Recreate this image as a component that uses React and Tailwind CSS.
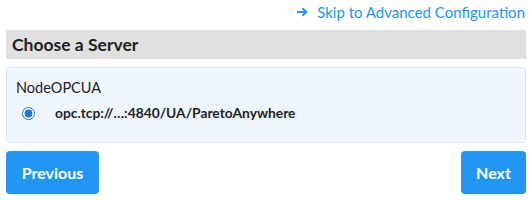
import React from "react";

// Server picker step — pick an OPC UA endpoint then continue
const SERVERS = [
  {
    name: "NodeOPCUA",
    endpoints: ["opc.tcp://\u2026:4840/UA/ParetoAnywhere"],
  },
];

export default function App() {
  const [selected, setSelected] = React.useState(SERVERS[0].endpoints[0]);

  return (
    <div className="w-[532px] h-[200px] bg-white px-[6px] font-['Lato',sans-serif] text-[#222]">
      {/* Skip link */}
      <div className="flex justify-end h-[30px] items-start pt-[2px] pr-[1px]">
        <a href="#" className="flex items-center gap-[9px] text-[15px] leading-[20px] text-[#2196f3] no-underline">
          <svg width="11" height="10" viewBox="0 0 11 10" fill="none" stroke="#2196f3" strokeWidth="2">
            <path d="M0 5h9M5.5 1.2L9.3 5 5.5 8.8" />
          </svg>
          Skip to Advanced Configuration
        </a>
      </div>

      {/* Header */}
      <div className="h-[29px] bg-[#e0e0e0] flex items-center px-[6px]">
        <h2 className="text-[17.5px] font-bold leading-none">Choose a Server</h2>
      </div>

      {/* Server list */}
      <div className="mt-[8px] h-[76px] bg-[#eff6fe] border border-[#dfe5ec] rounded-[3px] px-[9px] pt-[10px]">
        {SERVERS.map((server) => (
          <div key={server.name}>
            <div className="text-[14.5px] leading-[20px]">{server.name}</div>
            {server.endpoints.map((ep) => (
              <label key={ep} className="flex items-center mt-[5px] pl-[6px] cursor-pointer">
                <input
                  type="radio"
                  name="server"
                  checked={selected === ep}
                  onChange={() => setSelected(ep)}
                  className="w-[13px] h-[13px] m-0 accent-[#1a73e8]"
                />
                <span className="ml-[20px] text-[13.8px] font-bold">{ep}</span>
              </label>
            ))}
          </div>
        ))}
      </div>

      {/* Nav buttons */}
      <div className="flex justify-between mt-[8px]">
        <button className="h-[43px] w-[93px] rounded-[4px] bg-[#2196f3] text-white font-bold text-[16px]">
          Previous
        </button>
        <button className="h-[43px] w-[65px] rounded-[4px] bg-[#2196f3] text-white font-bold text-[16px]">
          Next
        </button>
      </div>
    </div>
  );
}
